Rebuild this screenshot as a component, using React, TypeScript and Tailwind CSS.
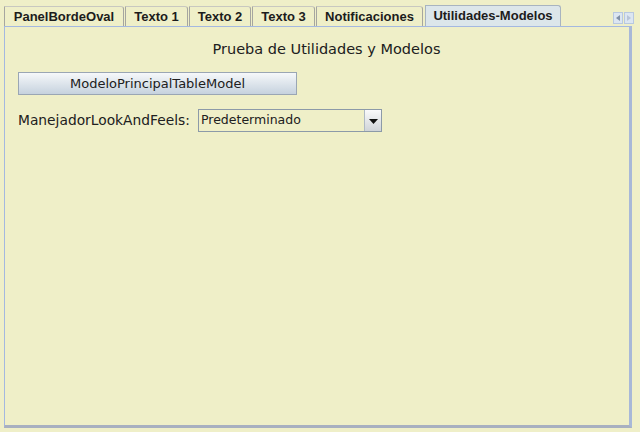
import React from "react";

const tabs = [
  { label: "PanelBordeOval", w: "w-[120px]" },
  { label: "Texto 1", w: "w-[63px]" },
  { label: "Texto 2", w: "w-[62px]" },
  { label: "Texto 3", w: "w-[63px]" },
  { label: "Notificaciones", w: "w-[107px]" },
];

export default function App() {
  return (
    <div className="relative w-[640px] h-[432px] bg-[#efefc8] overflow-hidden" style={{ fontFamily: '"DejaVu Sans", Verdana, sans-serif' }}>
      <div className="pt-[5px] pl-[4px] pr-[8px] flex flex-col h-full">
        {/* tab strip */}
        <div className="flex items-end gap-[1px] h-[21px]" style={{ fontFamily: '"Liberation Sans", Arial, sans-serif' }}>
          {tabs.map((t) => (
            <div
              key={t.label}
              className={`${t.w} h-[20px] flex items-center justify-center border border-b-0 border-[#a6a6a0] border-t-[#c8c8c0] rounded-tr-[3px] text-[13px] font-bold text-[#1c1c1c]`}
            >
              {t.label}
            </div>
          ))}
          <div className="w-[136px] h-[21px] flex items-center justify-center border border-b-0 border-[#a8b4c0] rounded-tr-[3px] bg-[#dce6ea] text-[13px] font-bold text-[#1c1c1c] ml-[1px]">
            Utilidades-Modelos
          </div>
        </div>
        {/* panel */}
        <div className="flex-1 mb-[4px] border-l border-t border-[#a4b8e0] border-r-[3px] border-b-[3px] border-r-[#a8b8d8] border-b-[#a8b0c0] flex flex-col">
          <div className="pt-[13px] pl-[19px] text-center text-[14.5px] leading-[18px] text-[#202020]">
            Prueba de Utilidades y Modelos
          </div>
          <div className="pl-[13px] pt-[14px]">
            <div className="w-[279px] h-[23px] flex items-center justify-center border border-[#9aa6b4] bg-gradient-to-b from-[#f6f8fa] to-[#c6d2de] text-[13px] text-[#202020]">
              ModeloPrincipalTableModel
            </div>
          </div>
          <div className="pl-[13px] pt-[14px] flex items-center">
            <span className="text-[13.8px] text-[#202020] w-[180px]">ManejadorLookAndFeels:</span>
            <div className="w-[184px] h-[23px] border border-[#8c9aa8] flex items-stretch">
              <div className="flex-1 flex items-center pl-[2px] text-[12.5px] text-[#202020]">Predeterminado</div>
              <div className="w-[17px] border-l border-[#b0bac4] bg-gradient-to-b from-[#fafafa] to-[#d0d4d8] flex items-center justify-center">
                <svg width="9" height="6" viewBox="0 0 9 6">
                  <polygon points="0,1 9,1 4.5,6" fill="#111" />
                </svg>
              </div>
            </div>
          </div>
        </div>
      </div>
      {/* tab scroll arrows */}
      <div className="absolute left-[613px] top-[12px] flex gap-[1px]">
        <div className="w-[10px] h-[12px] border border-[#b8c8e0] bg-[#dce6f2] flex items-center justify-center">
          <svg width="4" height="6" viewBox="0 0 4 6"><polygon points="4,0 4,6 0,3" fill="#8090a8" /></svg>
        </div>
        <div className="w-[10px] h-[12px] border border-[#b8c8e0] bg-[#dce6f2] flex items-center justify-center">
          <svg width="4" height="6" viewBox="0 0 4 6"><polygon points="0,0 0,6 4,3" fill="#b8c4d8" /></svg>
        </div>
      </div>
    </div>
  );
}
